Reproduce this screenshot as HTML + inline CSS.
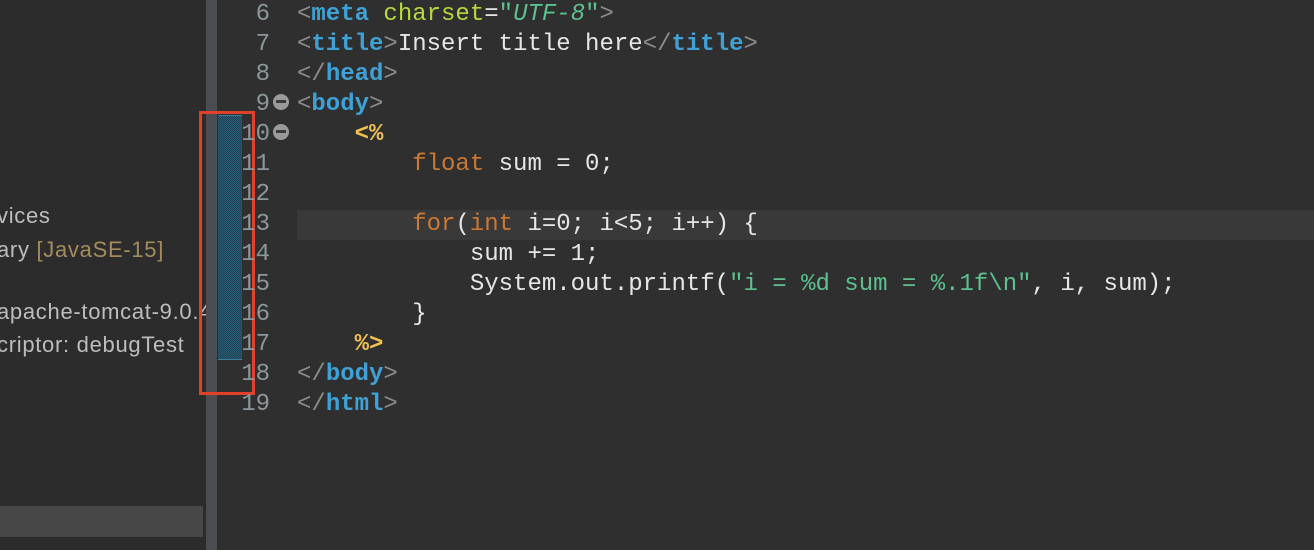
<!DOCTYPE html>
<html><head><style>
body{margin:0;width:1314px;height:550px;background:#2f2f2f;overflow:hidden;position:relative;font-family:"Liberation Sans",sans-serif}
#left{position:absolute;left:0;top:0;width:206px;height:550px;background:#2c2c2c;overflow:hidden}
#left div{position:absolute;left:-3px;font-size:22px;letter-spacing:0.7px;color:#bdbdbd;white-space:nowrap}
#sel{position:absolute;left:0;top:506px;width:206px;height:31px;background:#474747}
#bar{position:absolute;left:206px;top:0;width:11px;height:550px;background:#4b4d50}
#hatch{position:absolute;left:218px;top:115px;width:24px;height:243px;background:repeating-conic-gradient(#2b5f7a 0 25%,#1d3f52 0 50%) 0 0/2px 2px;border-top:1px solid #3d7ea0;border-bottom:1px solid #3d7ea0}
#red{position:absolute;left:199px;top:111px;width:50px;height:278px;border:3px solid #e2402a}
#hl{position:absolute;left:297px;top:210px;width:1017px;height:30px;background:#393939}
.ln{position:absolute;right:1044px;font-family:"Liberation Mono",monospace;font-size:24px;color:#8c979c;line-height:30px}
.code{position:absolute;left:297px;font-family:"Liberation Mono",monospace;font-size:24px;line-height:30px;color:#e6e6e6;white-space:pre}
.fold{position:absolute;left:273px;width:16px;height:16px;border-radius:50%;background:#9a9a9a}
.fold:after{content:"";position:absolute;left:3px;top:6px;width:10px;height:3px;background:#3a3a3a}
.g{color:#8c8c8c}.t{color:#3fa1d6;font-weight:bold}.a{color:#b6d83f}.s{color:#5cc08f}.k{color:#cc7833}.j{color:#f0c050;font-weight:bold}
</style></head><body>
<div id="left">
<div style="top:203px">vices</div>
<div style="top:237px">ary <span style="color:#a48c5c">[JavaSE-15]</span></div>
<div style="top:299px">apache-tomcat-9.0.4</div>
<div style="top:332px">criptor: debugTest</div>
<div id="sel"></div>
</div>
<div id="bar"></div>
<div id="hl"></div>
<div id="hatch"></div>
<div id="red"></div>
<div class="ln" style="top:0">6</div>
<div class="ln" style="top:30px">7</div>
<div class="ln" style="top:60px">8</div>
<div class="ln" style="top:90px">9</div>
<div class="ln" style="top:120px">10</div>
<div class="ln" style="top:150px">11</div>
<div class="ln" style="top:180px">12</div>
<div class="ln" style="top:210px">13</div>
<div class="ln" style="top:240px">14</div>
<div class="ln" style="top:270px">15</div>
<div class="ln" style="top:300px">16</div>
<div class="ln" style="top:330px">17</div>
<div class="ln" style="top:360px">18</div>
<div class="ln" style="top:390px">19</div>
<div class="fold" style="top:94px"></div>
<div class="fold" style="top:124px"></div>
<div class="code" style="top:0"><span class="g">&lt;</span><span class="t">meta</span> <span class="a">charset</span>=<span class="s">"<i>UTF-8</i>"</span><span class="g">&gt;</span></div>
<div class="code" style="top:30px"><span class="g">&lt;</span><span class="t">title</span><span class="g">&gt;</span>Insert title here<span class="g">&lt;/</span><span class="t">title</span><span class="g">&gt;</span></div>
<div class="code" style="top:60px"><span class="g">&lt;/</span><span class="t">head</span><span class="g">&gt;</span></div>
<div class="code" style="top:90px"><span class="g">&lt;</span><span class="t">body</span><span class="g">&gt;</span></div>
<div class="code" style="top:120px">    <span class="j">&lt;%</span></div>
<div class="code" style="top:150px">        <span class="k">float</span> sum = 0;</div>
<div class="code" style="top:210px">        <span class="k">for</span>(<span class="k">int</span> i=0; i&lt;5; i++) {</div>
<div class="code" style="top:240px">            sum += 1;</div>
<div class="code" style="top:270px">            System.out.printf(<span class="s">"i = %d sum = %.1f\n"</span>, i, sum);</div>
<div class="code" style="top:300px">        }</div>
<div class="code" style="top:330px">    <span class="j">%&gt;</span></div>
<div class="code" style="top:360px"><span class="g">&lt;/</span><span class="t">body</span><span class="g">&gt;</span></div>
<div class="code" style="top:390px"><span class="g">&lt;/</span><span class="t">html</span><span class="g">&gt;</span></div>
</body></html>
